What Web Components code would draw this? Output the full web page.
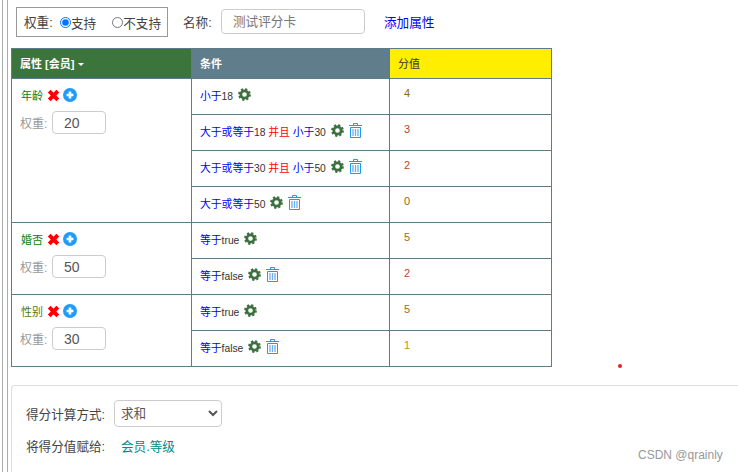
<!DOCTYPE html>
<html lang="zh-CN">
<head>
<meta charset="utf-8">
<title>评分卡</title>
<style>
  html, body { margin: 0; height: 472px; overflow: hidden; background: #fff; }
  body { font-family: "Liberation Sans", "Noto Sans CJK SC", sans-serif; color: #333; }
</style>
</head>
<body>
<score-page>
  <score-toolbar name="测试评分卡"></score-toolbar>
  <score-table></score-table>
  <score-footer></score-footer>
</score-page>

<script>
// ── Icons ──
class ScIcon extends HTMLElement {
  static PATHS = {
    gear: `<circle cx="7" cy="7" r="4" fill="none" stroke="#3d6f3f" stroke-width="3"/>
           <circle cx="7" cy="7" r="5.9" fill="none" stroke="#3d6f3f" stroke-width="2" stroke-dasharray="2.4 2.23"/>`,
    trash: `<path d="M4.5 2V.5h4V2" fill="none" stroke="#1e9bf0"/>
            <path d="M0 2.5h13" stroke="#1e9bf0"/>
            <path d="M1.5 4.5h10v10h-10z" fill="none" stroke="#1e9bf0"/>
            <path d="M4 6v7M6.5 6v7M9 6v7" stroke="#6aaef0" stroke-width="1.3"/>`,
    del:   `<path d="M2.2 2.2l8.6 8.6M10.8 2.2l-8.6 8.6" stroke="#f00" stroke-width="4"/>`,
    plus:  `<circle cx="7" cy="7" r="7" fill="#1e9bfb"/>
            <path d="M3.6 7h6.8M7 3.6v6.8" stroke="#fff" stroke-width="2.6"/>`,
  };
  // [width, height, viewBox width, viewBox height]
  static SIZES = { gear: [13, 13, 14, 14], trash: [13, 15, 13, 15], del: [13, 13, 13, 13], plus: [14, 14, 14, 14] };

  connectedCallback() {
    const kind = this.getAttribute('kind');
    const [w, h, vw, vh] = ScIcon.SIZES[kind];
    this.attachShadow({ mode: 'open' }).innerHTML = `
      <style>
        :host { display: inline-flex; flex: none; }
        svg { display: block; }
      </style>
      <svg width="${w}" height="${h}" viewBox="0 0 ${vw} ${vh}">${ScIcon.PATHS[kind]}</svg>`;
  }
}

// ── Page shell: double rail on the left, content on the right ──
class ScorePage extends HTMLElement {
  constructor() {
    super();
    this.attachShadow({ mode: 'open' }).innerHTML = `
      <style>
        :host { display: flex; height: 472px; position: relative; }
        .rail { flex: none; margin-left: 2px; border-left: 1px solid #aaa; border-right: 1px solid #aaa; width: 4px; }
        .content { flex: 1; min-width: 0; padding-left: 3px; }
        .dot { position: absolute; left: 618px; top: 364px; width: 4px; height: 4px; border-radius: 50%; background: #ee1c25; }
        .mark { position: absolute; left: 638px; top: 448px; font-size: 12px; line-height: 14px; color: #999; white-space: nowrap; }
      </style>
      <div class="rail"></div>
      <div class="content"><slot></slot></div>
      <div class="dot"></div>
      <div class="mark">CSDN @qrainly</div>`;
  }
}

// ── Top row: weight radios, name input, add link ──
class ScoreToolbar extends HTMLElement {
  connectedCallback() {
    this.attachShadow({ mode: 'open' }).innerHTML = `
      <style>
        :host { display: flex; align-items: center; height: 48px; padding: 7px 0 11px 5px; box-sizing: border-box; font-size: 12.6px; color: #444; }
        .box { display: flex; align-items: center; width: 152px; height: 30px; box-sizing: border-box; border: 1px solid #999; padding-left: 7px; }
        .box label { display: flex; align-items: center; }
        input[type=radio] { width: 11px; height: 11px; margin: 0; }
        .lbl { width: 36px; padding-bottom: 2px; }
        .yes { margin-right: 16px; }
        .name { margin-left: 15px; width: 30px; padding-bottom: 2px; }
        .field { margin-left: 8px; margin-bottom: 1px; width: 144px; height: 25px; box-sizing: border-box; border: 1px solid #ccc; border-radius: 4px; padding: 0 11px 2px; font: inherit; color: #777; }
        a { margin-left: 19px; padding-bottom: 2px; color: #00f; text-decoration: none; font-size: 12.6px; }
      </style>
      <div class="box">
        <span class="lbl">权重:</span>
        <label class="yes"><input type="radio" name="w" checked>支持</label>
        <label><input type="radio" name="w">不支持</label>
      </div>
      <span class="name">名称:</span>
      <input class="field" value="${this.getAttribute('name')}">
      <a href="#">添加属性</a>`;
  }
}

// ── Attribute / condition / score table ──
class ScoreTable extends HTMLElement {
  // b = 蓝色关键词, r = 红色连接词, t = 普通文字
  static GROUPS = [
    { name: '年龄', nameColor: '#0a800a', weight: 20, rows: [
      { cond: [['b', '小于'], ['t', '18']], score: 4, color: '#8a6a10' },
      { cond: [['b', '大于或等于'], ['t', '18 '], ['r', '并且'], ['t', ' '], ['b', '小于'], ['t', '30']], score: 3, color: '#b5482a', trash: true },
      { cond: [['b', '大于或等于'], ['t', '30 '], ['r', '并且'], ['t', ' '], ['b', '小于'], ['t', '50']], score: 2, color: '#b5482a', trash: true },
      { cond: [['b', '大于或等于'], ['t', '50']], score: 0, color: '#8a6a10', trash: true },
    ]},
    { name: '婚否', nameColor: '#0a800a', weight: 50, rows: [
      { cond: [['b', '等于'], ['t', 'true']], score: 5, color: '#a86a10' },
      { cond: [['b', '等于'], ['t', 'false']], score: 2, color: '#b5482a', trash: true },
    ]},
    { name: '性别', nameColor: '#4f7a10', weight: 30, rows: [
      { cond: [['b', '等于'], ['t', 'true']], score: 5, color: '#a86a10' },
      { cond: [['b', '等于'], ['t', 'false']], score: 1, color: '#d08a20', trash: true },
    ]},
  ];

  _condHtml(row) {
    const parts = row.cond.map(([k, s]) => `<span class="${k}">${s}</span>`).join('');
    return `<div class="cond">
      <span class="txt">${parts}</span>
      <sc-icon kind="gear"></sc-icon>
      ${row.trash ? '<sc-icon kind="trash"></sc-icon>' : ''}
    </div>`;
  }

  _groupHtml(g) {
    return g.rows.map((row, i) => `<tr>
      ${i === 0 ? `<td rowspan="${g.rows.length}" class="attr">
        <div class="head"><span style="color:${g.nameColor}">${g.name}</span><sc-icon kind="del"></sc-icon><sc-icon kind="plus"></sc-icon></div>
        <div class="weight"><span>权重:</span><input value="${g.weight}"></div>
      </td>` : ''}
      <td>${this._condHtml(row)}</td>
      <td class="score" style="color:${row.color}">${row.score}</td>
    </tr>`).join('');
  }

  connectedCallback() {
    this.attachShadow({ mode: 'open' }).innerHTML = `
      <style>
        :host { display: block; font-size: 11px; color: #333; }
        table { border-collapse: collapse; table-layout: fixed; width: 541px; }
        th, td { border: 1px solid #5f7b89; padding: 0; vertical-align: middle; box-sizing: border-box; }
        td { height: 36px; }
        th { height: 30px; text-align: left; font-weight: normal; padding: 0 0 2px 8px; color: #fff; }
        th.a { background: #3c753c; font-weight: bold; }
        th.c { background: #607d8b; font-weight: bold; }
        th.s { background: #ffee00; color: #333; }
        .caret { display: inline-block; margin-left: 4px; vertical-align: 2px; border: 3.5px solid transparent; border-top-color: #fff; border-bottom: 0; }
        .cond { display: flex; align-items: center; gap: 5px; padding: 0 0 4px 8px; white-space: nowrap; }
        .txt { padding-top: 1px; }
        .b { color: #00f; font-size: 10.8px; }
        .r { color: #f00; font-size: 10.8px; }
        .t { color: #333; white-space: pre; font-size: 10.3px; }
        .score { padding-left: 14px; padding-bottom: 7px; }
        .attr { vertical-align: top; padding: 9px 0 0 9px; }
        .head { display: flex; align-items: center; height: 14px; }
        .head sc-icon:nth-child(2) { margin-left: 4px; }
        .head sc-icon:nth-child(3) { margin-left: 3px; }
        .weight { display: flex; align-items: center; margin: 9px 0 0 -1px; color: #999; font-size: 12px; }
        .weight span { width: 32px; }
        .weight input { width: 54px; height: 23px; box-sizing: border-box; border: 1px solid #ccc; border-radius: 4px; padding: 0 11px; font: 14px "Liberation Sans", sans-serif; color: #555; }
      </style>
      <table>
        <colgroup><col style="width:180px"><col style="width:198px"><col style="width:162px"></colgroup>
        <tr>
          <th class="a">属性 [会员]<span class="caret"></span></th>
          <th class="c">条件</th>
          <th class="s">分值</th>
        </tr>
        ${ScoreTable.GROUPS.map(g => this._groupHtml(g)).join('')}
      </table>`;
  }
}

// ── Bottom panel: aggregation select + target ──
class ScoreFooter extends HTMLElement {
  connectedCallback() {
    this.attachShadow({ mode: 'open' }).innerHTML = `
      <style>
        :host { display: block; margin-top: 18px; height: 90px; box-sizing: border-box; padding: 14px 0 0 14px; border: 1px solid #ddd; border-right: 0; border-bottom: 0; border-top-left-radius: 4px; font-size: 12.6px; color: #444; }
        .row { display: flex; align-items: center; height: 27px; }
        .row + .row { margin-top: 5px; }
        .label { width: 88px; padding-bottom: 1px; }
        select { width: 108px; height: 27px; padding: 0 2px; border: 1px solid #ccc; border-radius: 4px; background: #fff; font: inherit; color: #555; }
        .bind { margin-left: 7px; padding-bottom: 1px; color: #008b8b; }
      </style>
      <div class="row"><span class="label">得分计算方式:</span><select><option>求和</option></select></div>
      <div class="row"><span class="label">将得分值赋给:</span><span class="bind">会员.等级</span></div>`;
  }
}

customElements.define('sc-icon', ScIcon);
customElements.define('score-page', ScorePage);
customElements.define('score-toolbar', ScoreToolbar);
customElements.define('score-table', ScoreTable);
customElements.define('score-footer', ScoreFooter);
</script>
</body>
</html>
